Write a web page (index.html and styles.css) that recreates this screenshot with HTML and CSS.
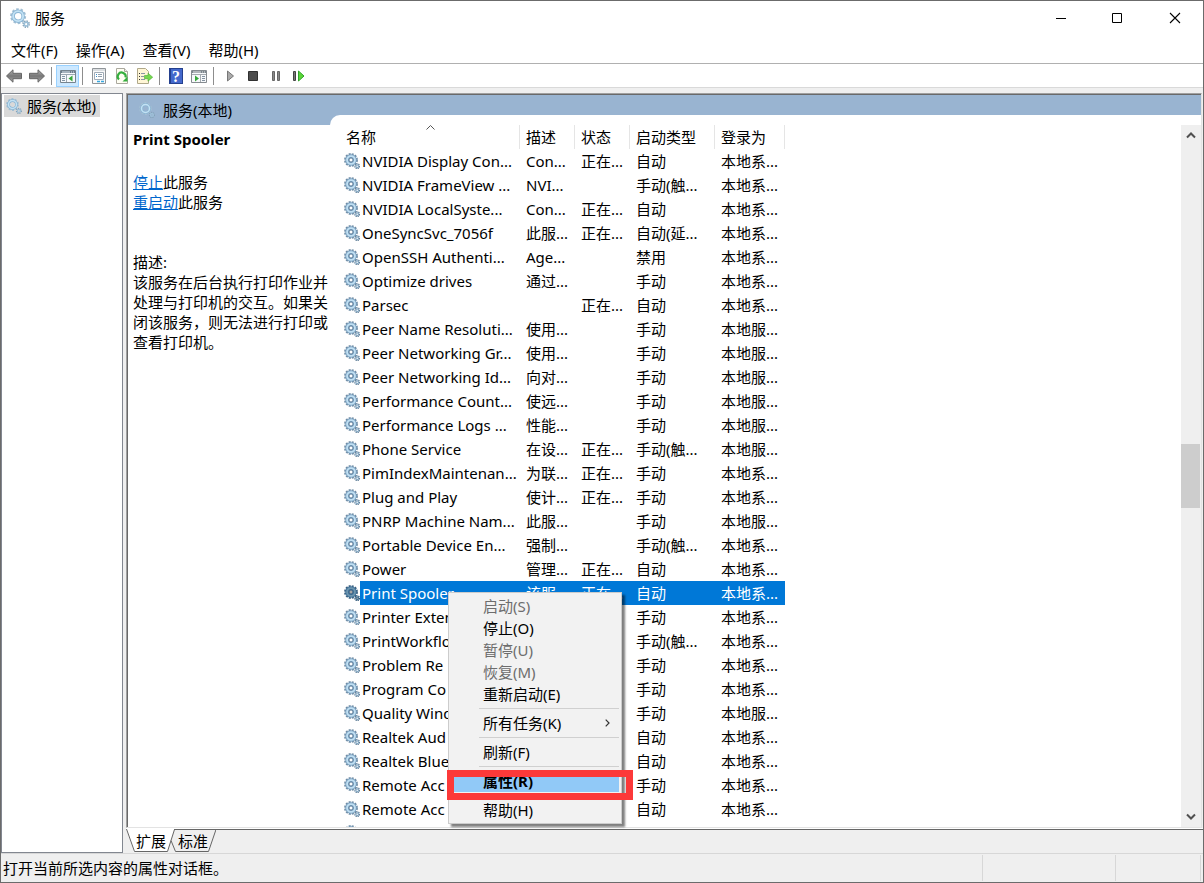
FILE: index.html
```html
<!DOCTYPE html>
<html lang="zh-CN">
<head>
<meta charset="utf-8">
<title>服务</title>
<link rel="stylesheet" href="styles.css">
</head>
<body>
<svg class="defs" aria-hidden="true">
  <symbol id="gear" viewBox="0 0 16 16">
    <circle cx="7" cy="7" r="5.9" fill="none" stroke="#6f8ca5" stroke-width="2" stroke-dasharray="2 1.09"/>
    <circle cx="7" cy="7" r="4" fill="none" stroke="#7da5c5" stroke-width="3.4"/>
    <circle cx="7" cy="7" r="3.900" fill="none" stroke="#c0dff2" stroke-width="1.900"/>
    <circle cx="7" cy="7" r="2.100" fill="#fff" stroke="#4a6f90" stroke-width="1"/>
    <circle cx="13.200" cy="13.200" r="2.300" fill="none" stroke="#5d7c96" stroke-width="1.400" stroke-dasharray="1.100 .706"/>
    <circle cx="13.200" cy="13.200" r="1.400" fill="#fff" stroke="#86a9c3" stroke-width="1.300"/>
  </symbol>
  <symbol id="gear-soft" viewBox="0 0 16 16">
    <circle cx="6.500" cy="6.500" r="5.500" fill="none" stroke="#a3bfd3" stroke-width="1.800" stroke-dasharray="2 1.456"/>
    <circle cx="6.500" cy="6.500" r="4" fill="none" stroke="#8ab5d4" stroke-width="2.800"/>
    <circle cx="6.500" cy="6.500" r="4" fill="none" stroke="#c3e2f4" stroke-width="1.500"/>
    <circle cx="12.900" cy="12.900" r="2.400" fill="none" stroke="#809fb6" stroke-width="1.300" stroke-dasharray="1.100 .785"/>
    <circle cx="12.900" cy="12.900" r="1.500" fill="none" stroke="#9dc0d8" stroke-width="1.300"/>
  </symbol>
  <linearGradient id="steel" x1="0" y1="0" x2="0" y2="1"><stop offset="0" stop-color="#b5b5b5"/><stop offset=".5" stop-color="#777"/><stop offset="1" stop-color="#a9a9a9"/></linearGradient>
</svg>

<div class="window">
  <header class="titlebar">
    <svg class="app-icon"><use href="#gear-soft"/></svg>
    <h1 class="app-title">服务</h1>
    <button class="win-btn" aria-label="最小化"><svg width="12" height="12" viewBox="0 0 12 12"><path d="M1 6.500h10" stroke="#000"/></svg></button>
    <button class="win-btn" aria-label="最大化"><svg width="12" height="12" viewBox="0 0 12 12"><path d="M.5 1.500h9v9h-9z" fill="none" stroke="#000"/></svg></button>
    <button class="win-btn" aria-label="关闭"><svg width="12" height="12" viewBox="0 0 12 12"><path d="M1 1l10 10M11 1L1 11" stroke="#000" stroke-width="1.100"/></svg></button>
  </header>

  <nav class="menubar">
    <button>文件(F)</button>
    <button>操作(A)</button>
    <button>查看(V)</button>
    <button>帮助(H)</button>
  </nav>

  <div class="toolbar">
    <button aria-label="后退"><svg viewBox="0 0 16 16"><path d="M.5 8L7 1.800v3.500h8.500v5.400H7v3.500z" fill="url(#steel)" stroke="#666"/></svg></button>
    <button aria-label="前进"><svg viewBox="0 0 16 16"><path d="M15.500 8L9 1.800v3.500H.5v5.400H9v3.500z" fill="url(#steel)" stroke="#666"/></svg></button>
    <span class="sep"></span>
    <button class="active" aria-label="显示/隐藏控制台树"><svg viewBox="0 0 16 16"><path d="M.5 2.500h15v12H.5z" fill="#f7f9fb" stroke="#76848f"/><path d="M1 3h14v2H1z" fill="#6c7e8d"/><path d="M2 4h8M11 4h1M13 4h1" stroke="#dfe8ef"/><path d="M1 6.500h14M6.500 7v7" stroke="#9ba8b2"/><path d="M2 8.500h3M2 10.500h3M2 12.500h3" stroke="#8295a5"/><path d="M12.500 7.500v6L8.500 10.500z" fill="#35a83a"/></svg></button>
    <span class="sep"></span>
    <button aria-label="属性"><svg viewBox="0 0 16 16"><path d="M1.500.5h13v15h-13z" fill="#fafafa" stroke="#909599"/><path d="M2 2h12" stroke="#bcc3c9"/><path d="M3.500 4.500h9v7h-9z" fill="#fff" stroke="#a2adb8"/><path d="M7 6.500h4M7 8.500h4" stroke="#91a0ae"/><path d="M5 6.500h1M5 8.500h1" stroke="#388dcc"/><path d="M6 13.500h3M10 13.500h3" stroke="#38a8df" stroke-width="1.500"/></svg></button>
    <button aria-label="刷新"><svg viewBox="0 0 16 16"><path d="M2.500.5h8l3 3v12h-11z" fill="#fffef3" stroke="#aaa89e"/><path d="M10.500.5v3h3" fill="#eee" stroke="#aaa89e"/><path d="M5 11.500A4 4 0 1 1 11.600 9.500" fill="none" stroke="#35ae3e" stroke-width="2.200"/><path d="M13.500 8.500v5h-5z" fill="#35ae3e"/></svg></button>
    <button aria-label="导出列表"><svg viewBox="0 0 16 16"><path d="M.5.5h8l3 3v12H.5z" fill="#fff6d6" stroke="#b0a88a"/><path d="M2 5.500h1M2 8.500h1M2 11.500h1" stroke="#333"/><path d="M4 5.500h4M4 8.500h3M4 11.500h4" stroke="#8d95a6"/><path d="M7.500 7.500h3.500v-2.300l4.700 4-4.700 4v-2.500H7.500z" fill="#76d84f" stroke="#4aad32" stroke-width=".6"/></svg></button>
    <span class="sep"></span>
    <button class="help" aria-label="帮助"><span class="help-mark">?</span></button>
    <button aria-label="显示/隐藏操作窗格"><svg viewBox="0 0 16 16"><path d="M.5 2.500h15v12H.5z" fill="#f7f9fb" stroke="#858b90"/><path d="M1 3h14v2H1z" fill="#7b858d"/><path d="M2 4h8M11 4h1M13 4h1" stroke="#e6e6e6"/><path d="M1 6.500h14M9.500 7v7" stroke="#a5abb0"/><path d="M11 8.500h3M11 10.500h3M11 12.500h3" stroke="#8291a0"/><path d="M4 7.500v6l4-3z" fill="#35a83a"/></svg></button>
    <span class="sep"></span>
    <button aria-label="启动服务"><svg viewBox="0 0 16 16"><path d="M5.500 3v10l6-5z" fill="#aaa" stroke="#777"/></svg></button>
    <button aria-label="停止服务"><svg viewBox="0 0 16 16"><path d="M3.500 3.500h9v9h-9z" fill="#4c4c4c" stroke="#303030"/></svg></button>
    <button aria-label="暂停服务"><svg viewBox="0 0 16 16"><path d="M4.500 3.500h2v9h-2zM9.500 3.500h2v9h-2z" fill="#888" stroke="#666"/></svg></button>
    <button aria-label="重启动服务"><svg viewBox="0 0 16 16"><path d="M2.500 3.500h2v9h-2z" fill="#777" stroke="#444"/><path d="M7.500 3v10l5.500-5z" fill="#5bd638" stroke="#30a52c"/></svg></button>
  </div>

  <main class="workspace">
    <aside class="tree">
      <a class="tree-item" href="#services"><svg class="icon"><use href="#gear-soft"/></svg>服务(本地)</a>
    </aside>

    <section class="console" id="services">
      <div class="pane">
        <div class="banner"><svg class="icon"><use href="#gear-soft"/></svg><span>服务(本地)</span></div>
        <div class="pane-body">
          <div class="details">
            <h2>Print Spooler</h2>
            <p><a href="#stop">停止</a>此服务<br><a href="#restart">重启动</a>此服务</p>
            <p class="description">描述:<br>该服务在后台执行打印作业并处理与打印机的交互。如果关闭该服务，则无法进行打印或查看打印机。</p>
          </div>
          <div class="list">
            <div class="list-view">
            <table class="services">
              <colgroup><col class="c-name"><col class="c-desc"><col class="c-state"><col class="c-start"><col class="c-login"></colgroup>
              <thead><tr><th class="sorted">名称<svg class="sort" viewBox="0 0 9 5"><path d="M.5 4.500l4-4 4 4" fill="none" stroke="#555"/></svg></th><th>描述</th><th>状态</th><th>启动类型</th><th>登录为</th></tr></thead>
              <tbody>
                <tr><td><div class="name"><svg class="icon"><use href="#gear"/></svg><span>NVIDIA Display Con...</span></div></td><td>Con...</td><td>正在...</td><td>自动</td><td>本地系...</td></tr>
                <tr><td><div class="name"><svg class="icon"><use href="#gear"/></svg><span>NVIDIA FrameView ...</span></div></td><td>NVI...</td><td></td><td>手动(触...</td><td>本地系...</td></tr>
                <tr><td><div class="name"><svg class="icon"><use href="#gear"/></svg><span>NVIDIA LocalSyste...</span></div></td><td>Con...</td><td>正在...</td><td>自动</td><td>本地系...</td></tr>
                <tr><td><div class="name"><svg class="icon"><use href="#gear"/></svg><span>OneSyncSvc_7056f</span></div></td><td>此服...</td><td>正在...</td><td>自动(延...</td><td>本地系...</td></tr>
                <tr><td><div class="name"><svg class="icon"><use href="#gear"/></svg><span>OpenSSH Authenti...</span></div></td><td>Age...</td><td></td><td>禁用</td><td>本地系...</td></tr>
                <tr><td><div class="name"><svg class="icon"><use href="#gear"/></svg><span>Optimize drives</span></div></td><td>通过...</td><td></td><td>手动</td><td>本地系...</td></tr>
                <tr><td><div class="name"><svg class="icon"><use href="#gear"/></svg><span>Parsec</span></div></td><td></td><td>正在...</td><td>自动</td><td>本地系...</td></tr>
                <tr><td><div class="name"><svg class="icon"><use href="#gear"/></svg><span>Peer Name Resoluti...</span></div></td><td>使用...</td><td></td><td>手动</td><td>本地服...</td></tr>
                <tr><td><div class="name"><svg class="icon"><use href="#gear"/></svg><span>Peer Networking Gr...</span></div></td><td>使用...</td><td></td><td>手动</td><td>本地服...</td></tr>
                <tr><td><div class="name"><svg class="icon"><use href="#gear"/></svg><span>Peer Networking Id...</span></div></td><td>向对...</td><td></td><td>手动</td><td>本地服...</td></tr>
                <tr><td><div class="name"><svg class="icon"><use href="#gear"/></svg><span>Performance Count...</span></div></td><td>使远...</td><td></td><td>手动</td><td>本地服...</td></tr>
                <tr><td><div class="name"><svg class="icon"><use href="#gear"/></svg><span>Performance Logs ...</span></div></td><td>性能...</td><td></td><td>手动</td><td>本地服...</td></tr>
                <tr><td><div class="name"><svg class="icon"><use href="#gear"/></svg><span>Phone Service</span></div></td><td>在设...</td><td>正在...</td><td>手动(触...</td><td>本地服...</td></tr>
                <tr><td><div class="name"><svg class="icon"><use href="#gear"/></svg><span>PimIndexMaintenan...</span></div></td><td>为联...</td><td>正在...</td><td>手动</td><td>本地系...</td></tr>
                <tr><td><div class="name"><svg class="icon"><use href="#gear"/></svg><span>Plug and Play</span></div></td><td>使计...</td><td>正在...</td><td>手动</td><td>本地系...</td></tr>
                <tr><td><div class="name"><svg class="icon"><use href="#gear"/></svg><span>PNRP Machine Nam...</span></div></td><td>此服...</td><td></td><td>手动</td><td>本地服...</td></tr>
                <tr><td><div class="name"><svg class="icon"><use href="#gear"/></svg><span>Portable Device En...</span></div></td><td>强制...</td><td></td><td>手动(触...</td><td>本地系...</td></tr>
                <tr><td><div class="name"><svg class="icon"><use href="#gear"/></svg><span>Power</span></div></td><td>管理...</td><td>正在...</td><td>自动</td><td>本地系...</td></tr>
                <tr class="selected"><td><div class="name"><svg class="icon"><use href="#gear"/></svg><span>Print Spooler</span></div></td><td>该服...</td><td>正在...</td><td>自动</td><td>本地系...</td></tr>
                <tr><td><div class="name"><svg class="icon"><use href="#gear"/></svg><span>Printer Exten</span></div></td><td></td><td></td><td>手动</td><td>本地系...</td></tr>
                <tr><td><div class="name"><svg class="icon"><use href="#gear"/></svg><span>PrintWorkflow</span></div></td><td></td><td></td><td>手动(触...</td><td>本地系...</td></tr>
                <tr><td><div class="name"><svg class="icon"><use href="#gear"/></svg><span>Problem Re</span></div></td><td></td><td></td><td>手动</td><td>本地系...</td></tr>
                <tr><td><div class="name"><svg class="icon"><use href="#gear"/></svg><span>Program Co</span></div></td><td></td><td></td><td>手动</td><td>本地系...</td></tr>
                <tr><td><div class="name"><svg class="icon"><use href="#gear"/></svg><span>Quality Wind</span></div></td><td></td><td></td><td>手动</td><td>本地服...</td></tr>
                <tr><td><div class="name"><svg class="icon"><use href="#gear"/></svg><span>Realtek Aud</span></div></td><td></td><td></td><td>自动</td><td>本地系...</td></tr>
                <tr><td><div class="name"><svg class="icon"><use href="#gear"/></svg><span>Realtek Blue</span></div></td><td></td><td></td><td>自动</td><td>本地系...</td></tr>
                <tr><td><div class="name"><svg class="icon"><use href="#gear"/></svg><span>Remote Acc</span></div></td><td></td><td></td><td>手动</td><td>本地系...</td></tr>
                <tr><td><div class="name"><svg class="icon"><use href="#gear"/></svg><span>Remote Acc</span></div></td><td></td><td></td><td>自动</td><td>本地系...</td></tr>
                <tr><td><div class="name"><svg class="icon"><use href="#gear"/></svg><span></span></div></td><td></td><td></td><td></td><td></td></tr>
              </tbody>
            </table>
            </div>
            <div class="scrollbar">
              <button aria-label="向上滚动"><svg viewBox="0 0 10 8"><path d="M1 6.500l4-4 4 4" fill="none" stroke="#505050" stroke-width="2"/></svg></button>
              <div class="track"><div class="before"></div><div class="thumb"></div><div class="after"></div></div>
              <button aria-label="向下滚动"><svg viewBox="0 0 10 8"><path d="M1 1.500l4 4 4-4" fill="none" stroke="#505050" stroke-width="2"/></svg></button>
            </div>
          </div>
        </div>
      </div>
      <div class="tabs">
        <svg class="tab-shape" viewBox="0 0 90 24"><path d="M0 0l8 23h33L48 0z" fill="#fff"/><path d="M.5 0l8 22.500h33l3.500-11" fill="none" stroke="#666"/><path d="M48.500 .5l-3.500 11 4.500 11h33L90 .5" fill="none" stroke="#666"/><path d="M48 .5h42" stroke="#666"/></svg>
        <button>扩展</button><button>标准</button>
      </div>
    </section>
  </main>

  <footer class="statusbar">
    <div class="status-text">打开当前所选内容的属性对话框。</div>
    <div class="status-a"></div>
    <div class="status-b"></div>
  </footer>

  <div class="context-menu" role="menu">
    <button role="menuitem" disabled>启动(S)</button>
    <button role="menuitem">停止(O)</button>
    <button role="menuitem" disabled>暂停(U)</button>
    <button role="menuitem" disabled>恢复(M)</button>
    <button role="menuitem">重新启动(E)</button>
    <hr>
    <button role="menuitem" class="has-sub">所有任务(K)<svg viewBox="0 0 5 8"><path d="M.7.7L4 4 .7 7.300" fill="none" stroke="#333" stroke-width="1.200"/></svg></button>
    <hr>
    <button role="menuitem">刷新(F)</button>
    <hr>
    <button role="menuitem" class="current">属性(R)</button>
    <hr class="blank">
    <button role="menuitem">帮助(H)</button>
  </div>
  <div class="marker"></div>
</div>
</body>
</html>
```

FILE: styles.css
```css
* { box-sizing: border-box; }
body {
  margin: 0;
  font-family: "Noto Sans", "Noto Sans CJK SC", sans-serif;
  font-size: 15px;
  line-height: 20px;
  color: #000;
}
button { margin: 0; padding: 0; border: 0; background: none; font: inherit; color: inherit; }
h1, h2, p { margin: 0; font-size: inherit; font-weight: normal; }
.defs { position: absolute; width: 0; height: 0; }
.icon { flex: none; width: 16px; height: 16px; }

.window {
  position: relative;
  display: flex;
  flex-direction: column;
  height: 100vh;
  border: 1px solid #6b6b6b;
  background: #efefef;
  overflow: hidden;
}

.titlebar { display: flex; align-items: center; height: 34px; margin-bottom: 0; padding-left: 9px; background: #fff; }
.app-icon { width: 20px; height: 20px; margin-right: 5px; }
.app-title { flex: 1; }
.win-btn { display: flex; align-items: center; justify-content: center; width: 57px; height: 34px; }

.menubar { display: flex; gap: 2px; height: 28px; padding: 2px 0 0 2px; background: #fff; }
.menubar button { padding: 0 8px; }

.toolbar {
  display: flex;
  align-items: center;
  height: 25px;
  padding-left: 1px;
  background: #fff;
  border-top: 1px solid #b0b0b0;
  border-bottom: 1px solid #d9d9d9;
}
.toolbar button { display: flex; align-items: center; justify-content: center; width: 23px; height: 22px; }
.toolbar svg { flex: none; width: 16px; height: 16px; }
.toolbar .active { background: #cce8ff; border: 1px solid #99d1ff; }
.sep { width: 1px; height: 18px; margin: 0 4px 0 3px; background: #8d8d8d; }
.help-mark {
  width: 14px;
  height: 16px;
  border: 1px solid #24408e;
  border-left-width: 2px;
  background: #4468cc;
  color: #fff;
  font: bold 16px/15px "Liberation Serif", serif;
  text-align: center;
}

.workspace { display: flex; flex: 1; min-height: 0; padding-top: 5px; }
.tree { width: 122px; padding: 1px 2px; border: 1px solid #828790; background: #fff; }
.tree-item {
  display: inline-flex;
  align-items: center;
  gap: 5px;
  height: 22px;
  padding: 0 4px 0 2px;
  background: #d9d9d9;
  color: #000;
  text-decoration: none;
  white-space: nowrap;
}

.console { display: flex; flex: 1; flex-direction: column; min-width: 0; margin-left: 3px; }
.pane {
  display: flex;
  flex: 1;
  flex-direction: column;
  min-height: 0;
  margin-right: 1px;
  border: 1px solid #a0a0a0;
  border-right-color: #e3e3e3;
  border-bottom-color: #e3e3e3;
  background: #99b4d1;
  box-shadow: inset 1px 1px #696969;
  padding: 1px 0 0 1px;
}
.banner { display: flex; align-items: center; gap: 8px; height: 30px; padding-left: 11px; }
.pane-body { display: flex; flex: 1; min-height: 0; }
.details { width: 202px; padding: 4px 2px 0 5px; background: #fff; }
.details h2 { margin-bottom: 23px; font-weight: bold; }
.details a { color: #0066cc; }
.description { margin-top: 40px; }
.list { display: flex; flex: 1; min-width: 0; margin-top: -10px; padding-top: 10px; background: #fff; border-top-left-radius: 10px; }
.list-view { flex: 1; overflow: hidden; padding-left: 10px; }

.services { width: 445px; table-layout: fixed; border-collapse: collapse; line-height: 24px; }
.c-name { width: 180px; }
.c-desc, .c-state { width: 55px; }
.c-start { width: 85px; }
.c-login { width: 70px; }
.services th { height: 24px; padding: 0 0 0 6px; text-align: left; font-weight: normal; background: linear-gradient(#e5e5e5, #e5e5e5) right / 1px 100% no-repeat; }
.services td { height: 24px; padding: 0 0 0 6px; white-space: nowrap; }
.services td:first-child { padding-left: 4px; }
.sorted { position: relative; }
.sort { position: absolute; top: 0; left: 48%; width: 9px; height: 5px; }
.name { display: flex; align-items: center; height: 24px; }
.name span { flex: 1; height: 24px; padding-left: 2px; }
.selected { color: #fff; }
.selected td:not(:first-child), .selected .name span { background: #0078d7; }
.selected .icon { filter: brightness(.65) saturate(2); }

.scrollbar { display: flex; flex-direction: column; width: 20px; background: #efefef; }
.scrollbar button { display: flex; align-items: center; justify-content: center; height: 20px; }
.scrollbar svg { width: 10px; height: 8px; }
.track { display: flex; flex: 1; flex-direction: column; }
.before, .after { flex: 1; }
.thumb { height: 64px; margin-right: 1px; background: #cdcdcd; }

.tabs {
  position: relative;
  display: flex;
  gap: 12px;
  height: 25px;
  padding: 2px 0 0 10px;
  background: linear-gradient(#fff, #fff) top / 100% 1px no-repeat, linear-gradient(#666, #666) 50px 1px / 100% 1px no-repeat;
}
.tab-shape { position: absolute; top: 1px; left: 0; width: 90px; height: 24px; }
.tabs button { position: relative; height: 22px; }

.statusbar { display: flex; height: 29px; padding: 1px 2px 1px 0; border-top: 1px solid #d7d7d7; }
.statusbar div { border-right: 1px solid #d7d7d7; }
.status-text { flex: 1; padding: 3px 2px; }
.status-a { width: 133px; }
.status-b { width: 85px; }

.context-menu {
  position: absolute;
  top: 591px;
  left: 447px;
  width: 174px;
  padding: 2px;
  border: 1px solid #ccc;
  background: #f2f2f2;
  box-shadow: 3px 3px 2px rgba(0, 0, 0, .5);
}
.context-menu button { display: flex; align-items: center; justify-content: space-between; width: 100%; height: 22px; padding: 0 9px 0 32px; }
.context-menu button:disabled { color: #6d6d6d; }
.context-menu hr { height: 1px; margin: 3px 0 3px 28px; border: 0; background: #d0d0d0; }
.context-menu .blank { background: none; }
.context-menu svg { width: 5px; height: 8px; }
.context-menu .current { background: #91c9f7; font-weight: bold; }
.marker { position: absolute; top: 769px; left: 446px; width: 186px; height: 30px; border: 7px solid #fc3939; }
```
